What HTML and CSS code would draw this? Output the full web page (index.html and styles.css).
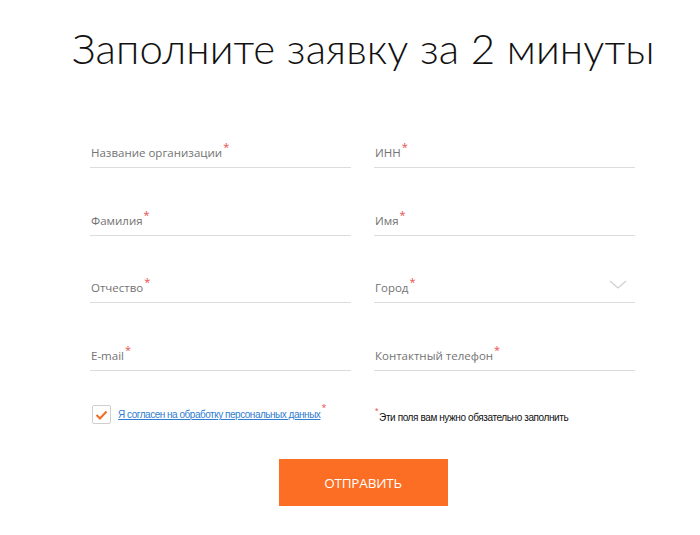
FILE: index.html
```html
<!DOCTYPE html>
<html lang="ru">
<head>
<meta charset="utf-8">
<link rel="stylesheet" href="styles.css">
</head>
<body>
<div class="page">
  <h1 class="title">Заполните заявку за 2 минуты</h1>
  <form class="form">
    <div class="grid">
      <label class="field"><span class="label">Название организации<sup class="req">*</sup></span></label>
      <label class="field"><span class="label">ИНН<sup class="req">*</sup></span></label>
      <label class="field"><span class="label">Фамилия<sup class="req">*</sup></span></label>
      <label class="field"><span class="label">Имя<sup class="req">*</sup></span></label>
      <label class="field"><span class="label">Отчество<sup class="req">*</sup></span></label>
      <label class="field select"><span class="label">Город<sup class="req">*</sup></span>
        <svg class="chevron" width="18" height="10" viewBox="0 0 18 10"><path d="M1 1 L9 8 L17 1" fill="none" stroke="#cfcfcf" stroke-width="1.2"/></svg>
      </label>
      <label class="field"><span class="label">E-mail<sup class="req">*</sup></span></label>
      <label class="field"><span class="label">Контактный телефон<sup class="req">*</sup></span></label>
    </div>
    <div class="bottom">
      <div class="agree">
        <span class="box"><svg width="13" height="10" viewBox="0 0 13 10"><path d="M1.5 5 L5 8.5 L11.5 1.5" fill="none" stroke="#f26b25" stroke-width="2"/></svg></span>
        <a class="link" href="#">Я согласен на обработку персональных данных</a><sup class="req small">*</sup>
      </div>
      <div class="note"><sup class="req small">*</sup>Эти поля вам нужно обязательно заполнить</div>
    </div>
    <div class="actions">
      <button type="button" class="btn">ОТПРАВИТЬ</button>
    </div>
  </form>
</div>
</body>
</html>
```
FILE: styles.css
```css
* { box-sizing: border-box; }
html, body { margin: 0; padding: 0; background: #fff; }
body { width: 700px; height: 535px; overflow: hidden; font-family: "Open Sans", "Noto Sans", sans-serif; }
.page { padding-top: 22px; }
.title {
  margin: 0 0 0 72px;
  font-family: "Lato", sans-serif;
  font-weight: 300;
  font-size: 42px;
  line-height: 52px;
  color: #111;
  letter-spacing: 0.1px;
  white-space: nowrap;
}
.form { margin: 51px 0 0 90px; width: 546px; }
.grid {
  display: grid;
  grid-template-columns: 261px 261px;
  column-gap: 23px;
  row-gap: 24.7px;
}
.field {
  display: flex;
  align-items: flex-end;
  justify-content: space-between;
  height: 43px;
  border-bottom: 1px solid #dcdcdc;
  padding: 0 0 6px 1px;
}
.label { font-size: 11.5px; color: #737373; line-height: 16px; }
.req { color: #e8514f; font-size: 11px; line-height: 0; vertical-align: 0; position: relative; top: -6px; margin-left: 1px; }
.req.small { font-size: 9px; top: -7px; }
.chevron { margin: 0 8px 6px 0; }
.bottom {
  display: grid;
  grid-template-columns: 261px 261px;
  column-gap: 23px;
  margin-top: 34px;
  align-items: center;
}
.agree { display: flex; align-items: center; padding-left: 2px; }
.box {
  width: 19px; height: 19px;
  border: 1px solid #cfcfcf;
  border-radius: 2px;
  display: flex; align-items: center; justify-content: center;
  margin-right: 7px;
  flex: none;
}
.link { font-size: 10px; color: #2f7dd1; text-decoration: underline; white-space: nowrap; font-family: "Liberation Sans", sans-serif; letter-spacing: -0.48px; }
.note { font-size: 10px; color: #111; white-space: nowrap; padding-top: 5px; padding-left: 1px; font-family: "Liberation Sans", sans-serif; letter-spacing: -0.4px; }
.note .req { margin-left: 0; margin-right: 1px; }
.actions { display: flex; justify-content: center; margin-top: 35px; }
.btn {
  width: 169px; height: 47px;
  background: #fb6e24;
  border: none;
  color: #fff;
  font-family: "Open Sans", sans-serif;
  font-size: 13.5px;
  letter-spacing: -0.2px;
  cursor: pointer;
}
```
